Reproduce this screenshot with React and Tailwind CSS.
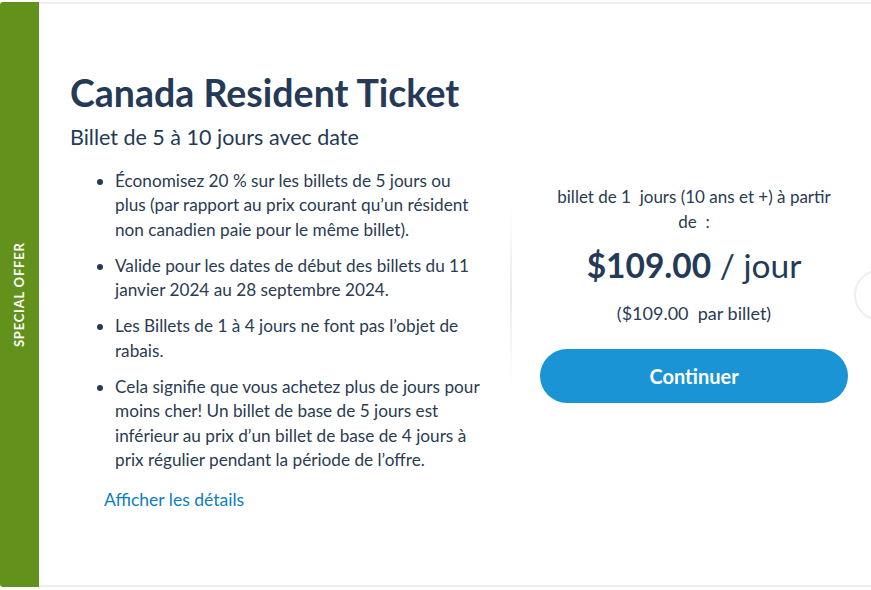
import React from 'react';

const bullets = [
  'Économisez 20 % sur les billets de 5 jours ou plus (par rapport au prix courant qu’un résident non canadien paie pour le même billet).',
  'Valide pour les dates de début des billets du 11 janvier 2024 au 28 septembre 2024.',
  'Les Billets de 1 à 4 jours ne font pas l’objet de rabais.',
  'Cela signifie que vous achetez plus de jours pour moins cher! Un billet de base de 5 jours est inférieur au prix d’un billet de base de 4 jours à prix régulier pendant la période de l’offre.',
];

function SpecialBand() {
  return (
    <div className="w-[39px] shrink-0 bg-[#62921b] rounded-l-[3px] flex items-center justify-center">
      <span className="-rotate-90 whitespace-nowrap text-white text-[13px] font-bold tracking-[0.06em] uppercase">
        Special Offer
      </span>
    </div>
  );
}

function OfferDetails() {
  return (
    <div className="w-[471px] shrink-0 flex flex-col justify-center pl-[31px] pb-[6px]">
      <h1 className="text-[37.5px] leading-[42px] font-bold text-[#243a56]">Canada Resident Ticket</h1>
      <h2 className="mt-[9px] text-[21.5px] leading-[28px] text-[#243a56]">Billet de 5 à 10 jours avec date</h2>
      <ul className="mt-[18px] pl-[45px] w-[414px] list-disc marker:text-[#243a56] text-[17.2px] leading-[24.5px] text-[#2a3b52]">
        {bullets.map((b) => (
          <li key={b} className="mt-[11.5px] first:mt-0">
            {b}
          </li>
        ))}
      </ul>
      <a href="#" className="mt-[15px] ml-[34px] text-[17.5px] leading-[24px] text-[#0b7ec1]">
        Afficher les détails
      </a>
    </div>
  );
}

function PricePanel() {
  return (
    <div className="flex-1 flex flex-col items-center justify-center pl-[28px] pr-[23px] pb-[2px] text-[#2a3b52]">
      <p className="w-[290px] text-center text-[17px] leading-[25px]">
        billet de 1&nbsp; jours (10 ans et +) à partir de&nbsp;&nbsp;:
      </p>
      <p className="mt-[11px] text-[33.5px] leading-[40px] text-[#243a56]">
        <span className="font-bold">$109.00</span> / jour
      </p>
      <p className="mt-[16px] text-[18px] leading-[24px]">($109.00&nbsp; par billet)</p>
      <button
        type="button"
        className="mt-[24px] w-full h-[54px] rounded-full bg-[#1b94d6] text-white text-[20px] font-bold"
      >
        Continuer
      </button>
    </div>
  );
}

export default function App() {
  return (
    <div className="relative h-[590px] w-full bg-white pt-[2px] overflow-hidden" style={{ fontFamily: 'Lato, "Noto Sans", sans-serif' }}>
      <div className="flex h-[585px]">
        <SpecialBand />
        <div className="flex-1 flex border-t-2 border-b-2 border-[#eeeeee]">
          <OfferDetails />
          <div className="w-[2px] h-[180px] self-center bg-gradient-to-b from-transparent via-[#eaeaea] to-transparent" />
          <PricePanel />
        </div>
      </div>
      <div className="absolute left-[854px] top-[269px] w-[52px] h-[52px] rounded-full border-2 border-[#eeeeee] bg-white" />
    </div>
  );
}
